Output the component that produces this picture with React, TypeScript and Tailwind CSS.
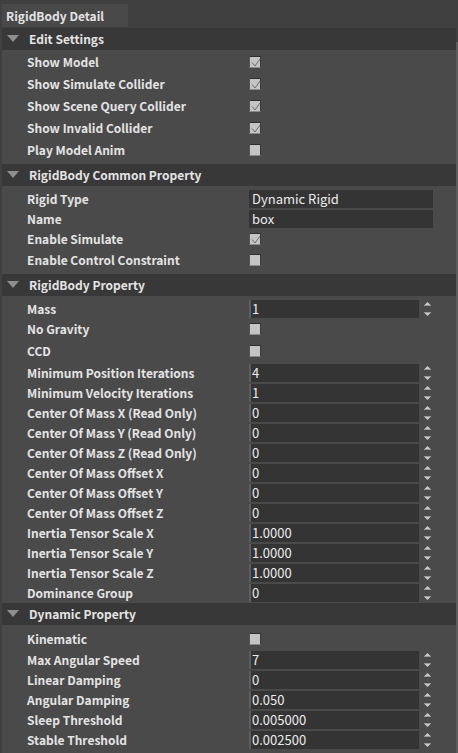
import React from "react";

type Row =
  | { label: string; kind: "check"; checked: boolean; h: string }
  | { label: string; kind: "text"; value: string; h: string }
  | { label: string; kind: "num"; value: string; h: string };

type Section = { title: string; body: string; rows: Row[] };

const num = (label: string, value: string): Row => ({ label, kind: "num", value, h: "h-[20px]" });
const check = (label: string, checked: boolean, h = "h-[22px]"): Row => ({ label, kind: "check", checked, h });

const sections: Section[] = [
  {
    title: "Edit Settings",
    body: "pt-[1px] pb-[3px]",
    rows: [
      check("Show Model", true),
      check("Show Simulate Collider", true),
      check("Show Scene Query Collider", true),
      check("Show Invalid Collider", true),
      check("Play Model Anim", false),
    ],
  },
  {
    title: "RigidBody Common Property",
    body: "pt-[3px] pb-[3px]",
    rows: [
      { label: "Rigid Type", kind: "text", value: "Dynamic Rigid", h: "h-[20px]" },
      { label: "Name", kind: "text", value: "box", h: "h-[20px]" },
      check("Enable Simulate", true, "h-[20px]"),
      check("Enable Control Constraint", false),
    ],
  },
  {
    title: "RigidBody Property",
    body: "pt-[3px]",
    rows: [
      num("Mass", "1"),
      check("No Gravity", false, "h-[19px]"),
      check("CCD", false, "h-[25px]"),
      num("Minimum Position Iterations", "4"),
      num("Minimum Velocity Iterations", "1"),
      num("Center Of Mass X (Read Only)", "0"),
      num("Center Of Mass Y (Read Only)", "0"),
      num("Center Of Mass Z (Read Only)", "0"),
      num("Center Of Mass Offset X", "0"),
      num("Center Of Mass Offset Y", "0"),
      num("Center Of Mass Offset Z", "0"),
      num("Inertia Tensor Scale X", "1.0000"),
      num("Inertia Tensor Scale Y", "1.0000"),
      num("Inertia Tensor Scale Z", "1.0000"),
      num("Dominance Group", "0"),
    ],
  },
  {
    title: "Dynamic Property",
    body: "pt-[3px] pb-[3px]",
    rows: [
      check("Kinematic", false),
      num("Max Angular Speed", "7"),
      num("Linear Damping", "0"),
      num("Angular Damping", "0.050"),
      num("Sleep Threshold", "0.005000"),
      num("Stable Threshold", "0.002500"),
    ],
  },
];

const CheckBox = ({ checked }: { checked: boolean }) => (
  <div className="relative h-[12px] w-[12px] border-t border-l border-t-[#2e2e2e] border-l-[#555] border-r border-b border-r-[#3a3a3a] border-b-[#8a8a8a] bg-[#c4c4c4]">
    {checked && (
      <svg className="absolute left-[1px] top-[1px]" width="10" height="10" viewBox="0 0 10 10">
        <path d="M1 4.5 L4 8 L9 1" fill="none" stroke="#6e6e6e" strokeWidth="1" />
      </svg>
    )}
  </div>
);

const Spinner = () => (
  <svg width="9" height="18" viewBox="0 0 9 18" className="ml-[4px]">
    <polygon points="4.5,2 1.5,5 7.5,5" fill="#c9c9c9" />
    <rect x="1" y="5" width="7" height="1" fill="#9a9a9a" />
    <rect x="1" y="12" width="7" height="1" fill="#9a9a9a" />
    <polygon points="1.5,13 7.5,13 4.5,16" fill="#c9c9c9" />
  </svg>
);

const Triangle = () => (
  <svg width="12" height="8" viewBox="0 0 12 8" className="ml-[5px] mr-[10px]">
    <polygon points="0,0 12,0 6,7" fill="#8e8e8e" />
  </svg>
);

const Control = ({ row }: { row: Row }) => {
  if (row.kind === "check") return <CheckBox checked={row.checked} />;
  if (row.kind === "text")
    return (
      <div className="flex h-[18px] w-[184px] items-center bg-[#343434] pl-[3px] text-[13px] font-normal text-[#ececec]">
        {row.value}
      </div>
    );
  return (
    <div className="flex items-center">
      <div className="flex h-[18px] w-[170px] items-center border-l-2 border-[#5e5e5e] bg-[#343434] pl-[1px] text-[13px] font-normal text-[#ececec]">
        {row.value}
      </div>
      <Spinner />
    </div>
  );
};

const App = () => {
  return (
    <div className="flex h-[753px] w-[458px] flex-col overflow-hidden bg-[#404040] font-['Noto_Sans_CJK_SC',sans-serif] text-[12px] font-bold text-[#e4e4e4]">
      <div className="flex h-[28px] items-end pl-[2px] pb-[1px]">
        <div className="flex h-[23px] w-[126px] items-center bg-[#494949] pl-[4px]">RigidBody Detail</div>
      </div>
      <div className="flex flex-1">
        <div className="ml-[2px] flex flex-1 flex-col bg-[#4a4a4a]">
          {sections.map((s) => (
            <div key={s.title}>
              <div className="flex h-[22px] items-center bg-[#383838]">
                <Triangle />
                <span>{s.title}</span>
              </div>
              <div className={s.body}>
                {s.rows.map((r) => (
                  <div key={r.label} className={`flex items-center ${r.h}`}>
                    <div className="w-[247px] pl-[25px]">{r.label}</div>
                    <Control row={r} />
                  </div>
                ))}
              </div>
            </div>
          ))}
        </div>
        <div className="mt-[14px] w-[2px] bg-[#5c5c5c]" />
      </div>
    </div>
  );
};

export default App;
